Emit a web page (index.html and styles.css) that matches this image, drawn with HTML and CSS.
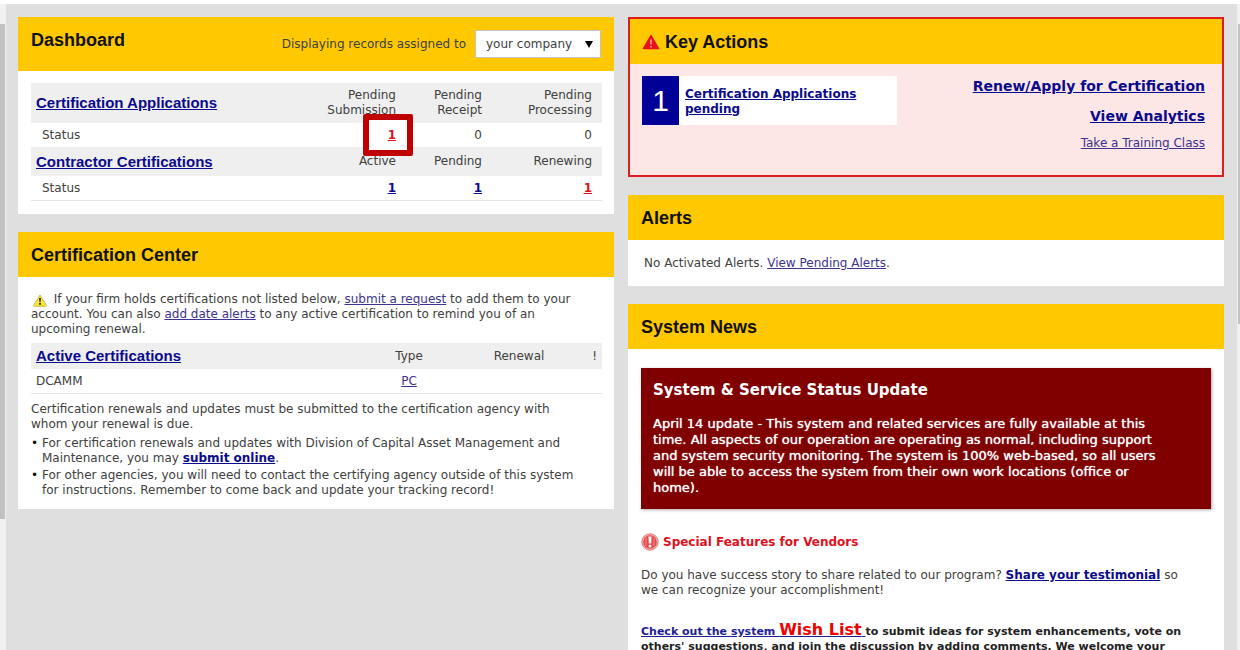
FILE: index.html
```html
<!DOCTYPE html>
<html lang="en">
<head>
    <meta charset="UTF-8">
    <meta name="viewport" content="width=device-width, initial-scale=1.0">
    <title>Dashboard</title>
    <link rel="stylesheet" href="styles.css">
</head>
<body>
    <div class="topline"></div>
    <div class="window">
        <div class="scrollbar scroll-left"><div class="thumb"></div></div>

        <main class="content">
            <div class="column">
                <section class="panel dashboard">
                    <div class="panel-head dashboard-head">
                        <h2>Dashboard</h2>
                        <div class="filter">
                            <label for="assigned">Displaying records assigned to</label>
                            <div class="select-wrap">
                                <select id="assigned">
                                    <option>your company</option>
                                </select>
                                <span class="select-arrow"></span>
                            </div>
                        </div>
                    </div>
                    <div class="panel-body">
                        <table class="status-table">
                            <colgroup>
                                <col>
                                <col class="col-first">
                                <col class="col-second">
                                <col class="col-third">
                            </colgroup>
                            <tr class="head-row">
                                <th><a href="#">Certification Applications</a></th>
                                <td>Pending Submission</td>
                                <td>Pending Receipt</td>
                                <td>Pending Processing</td>
                            </tr>
                            <tr>
                                <td class="row-label">Status</td>
                                <td class="marked"><span class="marker"></span><a class="count red" href="#">1</a></td>
                                <td>0</td>
                                <td>0</td>
                            </tr>
                            <tr class="head-row sub-head">
                                <th><a href="#">Contractor Certifications</a></th>
                                <td>Active</td>
                                <td>Pending</td>
                                <td>Renewing</td>
                            </tr>
                            <tr class="last-row">
                                <td class="row-label">Status</td>
                                <td><a class="count" href="#">1</a></td>
                                <td><a class="count" href="#">1</a></td>
                                <td><a class="count red" href="#">1</a></td>
                            </tr>
                        </table>
                    </div>
                </section>

                <section class="panel cert-center">
                    <div class="panel-head">
                        <h2>Certification Center</h2>
                    </div>
                    <div class="panel-body">
                        <p>
                            <svg class="icon-warn" width="16" height="13" viewBox="0 0 16 13">
                                <path d="M8 1 L14.5 11.5 Q14.5 12.3 13.5 12.3 H2.5 Q1.5 12.3 1.5 11.5 Z" fill="#f5e630" stroke="#c9bd6a" stroke-width="1"/>
                                <path d="M7 4 H9 L8.6 8 H7.4 Z" fill="#333"/>
                                <circle cx="8" cy="9.8" r="1.1" fill="#333"/>
                            </svg>
                            If your firm holds certifications not listed below, <a href="#">submit a request</a> to add them to your<br>
                            account. You can also <a href="#">add date alerts</a> to any active certification to remind you of an<br>
                            upcoming renewal.
                        </p>
                        <table class="cert-table">
                            <colgroup>
                                <col>
                                <col class="col-type">
                                <col class="col-renewal">
                                <col class="col-flag">
                            </colgroup>
                            <tr class="head-row">
                                <th><a href="#">Active Certifications</a></th>
                                <td>Type</td>
                                <td>Renewal</td>
                                <td class="flag">!</td>
                            </tr>
                            <tr class="last-row">
                                <td class="agency">DCAMM</td>
                                <td><a href="#">PC</a></td>
                                <td></td>
                                <td></td>
                            </tr>
                        </table>
                        <p>Certification renewals and updates must be submitted to the certification agency with<br>
                        whom your renewal is due.</p>
                        <ul>
                            <li>For certification renewals and updates with Division of Capital Asset Management and<br>
                            Maintenance, you may <a class="strong" href="#">submit online</a>.</li>
                            <li>For other agencies, you will need to contact the certifying agency outside of this system<br>
                            for instructions. Remember to come back and update your tracking record!</li>
                        </ul>
                    </div>
                </section>
            </div>

            <div class="column">
                <section class="panel key-actions">
                    <div class="panel-head">
                        <svg class="icon-alert" width="18" height="16" viewBox="0 0 18 16">
                            <path d="M9 1.5 L16.5 14.5 H1.5 Z" fill="#e8101c" stroke="#e8101c" stroke-width="1.5" stroke-linejoin="round"/>
                            <path d="M9 5.5 V10.5 M9 12 V13.5" stroke="#f7a08c" stroke-width="1.6"/>
                        </svg>
                        <h2>Key Actions</h2>
                    </div>
                    <div class="key-body">
                        <div class="pending-card">
                            <div class="pending-number">1</div>
                            <div class="pending-text"><a class="strong" href="#">Certification Applications pending</a></div>
                        </div>
                        <div class="key-links">
                            <a class="big" href="#">Renew/Apply for Certification</a>
                            <a class="big" href="#">View Analytics</a>
                            <a href="#">Take a Training Class</a>
                        </div>
                    </div>
                </section>

                <section class="panel">
                    <div class="panel-head">
                        <h2>Alerts</h2>
                    </div>
                    <div class="alerts-body">No Activated Alerts. <a href="#">View Pending Alerts</a>.</div>
                </section>

                <section class="panel news">
                    <div class="panel-head">
                        <h2>System News</h2>
                    </div>
                    <div class="news-body">
                        <div class="status-update">
                            <h3>System &amp; Service Status Update</h3>
                            <p>April 14 update - This system and related services are fully available at this<br>
                            time. All aspects of our operation are operating as normal, including support<br>
                            and system security monitoring. The system is 100% web-based, so all users<br>
                            will be able to access the system from their own work locations (office or<br>
                            home).</p>
                        </div>
                        <h4>
                            <svg width="18" height="18" viewBox="0 0 18 18">
                                <circle cx="9" cy="9" r="8.2" fill="#f4b0b0" stroke="#d88080" stroke-width="1"/>
                                <circle cx="9" cy="9" r="6.8" fill="#e84a4a"/>
                                <path d="M7.5 3.5 H10.5 L10.2 10.5 H7.8 Z" fill="#fff"/>
                                <circle cx="9" cy="13" r="1.5" fill="#fff"/>
                                <path d="M5 5 V13 M13 5 V13" stroke="#f08c8c" stroke-width="1"/>
                            </svg>
                            Special Features for Vendors
                        </h4>
                        <p>Do you have success story to share related to our program? <a class="strong" href="#">Share your testimonial</a> so<br>
                        we can recognize your accomplishment!</p>
                        <p class="wish"><a href="#">Check out the system <span class="wish-list">Wish List</span> </a>to submit ideas for system enhancements, vote on<br>
                        others' suggestions, and join the discussion by adding comments. We welcome your</p>
                    </div>
                </section>
            </div>
        </main>

        <div class="scrollbar scroll-right"><div class="thumb"></div></div>
    </div>
</body>
</html>
```

FILE: styles.css
```css
* {
    box-sizing: border-box;
}

body {
    margin: 0;
    height: 100vh;
    overflow: hidden;
    display: flex;
    flex-direction: column;
    background: #dfdfdf;
    color: #404040;
    font-family: Verdana, "DejaVu Sans", sans-serif;
    font-size: 12px;
    line-height: 15px;
}

h2, h3, h4, p, ul {
    margin: 0;
    padding: 0;
}

a {
    color: #3c3290;
}

.strong,
.count,
.big {
    color: #0a0a8c;
    font-weight: bold;
}

.red {
    color: #e0101c;
}

.topline {
    flex: none;
    height: 4px;
    background: #fff;
}

.window {
    flex: 1;
    min-height: 0;
    display: flex;
}

.scrollbar {
    flex: none;
    padding-top: 20px;
    background: #f1f1f1;
}

.scroll-left {
    width: 6px;
    padding-right: 1px;
}

.scroll-right {
    width: 3px;
    padding-left: 1px;
}

.thumb {
    background: #c1c1c1;
}

.scroll-left .thumb {
    height: 79%;
}

.scroll-right .thumb {
    height: 48%;
}

.content {
    flex: 1;
    display: grid;
    grid-template-columns: 1fr 1fr;
    gap: 14px;
    padding: 13px 13px 0 12px;
}

.column {
    display: flex;
    flex-direction: column;
    gap: 18px;
    min-width: 0;
}

.panel {
    flex: none;
    background: #fff;
}

.panel-head {
    display: flex;
    align-items: center;
    gap: 5px;
    padding: 11px 13px 10px;
    background: #ffc800;
}

h2 {
    color: #111;
    font: bold 18px/24px Arial, "Liberation Sans", sans-serif;
}

.panel-body {
    padding: 12px 12px 13px 13px;
}

/* Dashboard */
.dashboard-head {
    align-items: flex-start;
    justify-content: space-between;
    padding-bottom: 13px;
}

.filter {
    display: flex;
    align-items: center;
    gap: 9px;
    padding-top: 2px;
}

.select-wrap {
    position: relative;
}

select {
    appearance: none;
    width: 126px;
    height: 28px;
    padding: 0 10px;
    border: 1px solid #c0c0c0;
    border-radius: 0;
    background: #fff;
    color: #404040;
    font: inherit;
}

.select-arrow {
    position: absolute;
    top: 11px;
    right: 8px;
    border: 4px solid transparent;
    border-top: 7px solid #000;
    border-bottom: 0;
    pointer-events: none;
}

table {
    width: 100%;
    table-layout: fixed;
    border-collapse: collapse;
}

th {
    padding: 0 5px;
    text-align: left;
    font: bold 15px/18px Arial, "Liberation Sans", sans-serif;
}

th a {
    color: #0a0a8c;
}

td {
    padding: 5px 10px 4px;
}

.head-row {
    background: #efefef;
}

.last-row {
    border-bottom: 1px solid #e4e4e4;
}

.status-table td {
    text-align: right;
}

.status-table .row-label {
    padding-left: 11px;
    text-align: left;
}

.head-row td {
    padding-bottom: 5px;
}

.sub-head td {
    padding-top: 7px;
    padding-bottom: 7px;
}

.col-first {
    width: 90px;
}

.col-second {
    width: 86px;
}

.col-third {
    width: 110px;
}

.marked {
    position: relative;
}

.marker {
    position: absolute;
    top: -9px;
    right: -7px;
    width: 50px;
    height: 42px;
    border: 6px solid #c00000;
    border-radius: 2px;
    background: #fff;
}

.marked .count {
    position: relative;
}

/* Certification Center */
.cert-center .panel-body {
    padding-top: 15px;
    padding-bottom: 11px;
}

.icon-warn {
    margin: 0 2px 0 1px;
    vertical-align: -4px;
}

.cert-table {
    margin: 6px 0 8px;
}

.cert-table td {
    text-align: center;
}

.cert-table .agency {
    padding-left: 5px;
    text-align: left;
}

.cert-table .flag {
    padding-left: 0;
    padding-right: 5px;
    text-align: right;
}

.cert-table .head-row td {
    padding-top: 6px;
}

.col-type {
    width: 100px;
}

.col-renewal {
    width: 120px;
}

.col-flag {
    width: 23px;
}

ul {
    padding-top: 2px;
    list-style: none;
}

li {
    display: flow-root;
    padding-left: 11px;
    margin-top: 2px;
}

li::before {
    content: "•";
    float: left;
    width: 11px;
    margin-left: -11px;
    color: #111;
}

/* Key Actions */
.key-actions {
    border: 2px solid #dc1e1e;
    background: #fde6e6;
}

.key-actions .panel-head {
    padding: 11px 11px 10px 12px;
}

.key-body {
    display: flex;
    justify-content: space-between;
    align-items: flex-start;
    padding: 12px 17px 24px 12px;
}

.pending-card {
    display: flex;
    width: 255px;
    background: #fff;
}

.pending-number {
    width: 37px;
    background: #000096;
    color: #fff;
    font: 30px/49px Arial, "Liberation Sans", sans-serif;
    text-align: center;
}

.pending-text {
    flex: 1;
    padding: 11px 6px 0;
}

.key-links {
    display: flex;
    flex-direction: column;
    align-items: flex-end;
    gap: 10px;
}

.big {
    font-size: 14px;
    line-height: 20px;
}

/* Alerts */
.alerts-body {
    padding: 16px 16px 15px;
}

/* System News */
.news-body {
    padding: 19px 13px 24px;
}

.status-update {
    padding: 13px 12px;
    background: #800000;
    color: #fff;
    box-shadow: 1px 1px 3px #aaa;
}

h3 {
    margin-bottom: 17px;
    font-size: 15px;
    line-height: 18px;
}

.status-update p {
    font-size: 13px;
    line-height: 16px;
    text-shadow: 0 0 1px #fff;
}

h4 {
    display: flex;
    align-items: center;
    gap: 4px;
    margin: 24px 0 17px;
    color: #e0101c;
    font-size: 12px;
    line-height: 18px;
}

.news-body .wish {
    margin-top: 23px;
    color: #222;
    font-size: 11px;
    font-weight: bold;
}

.wish a {
    color: #1e1e96;
}

.wish-list {
    color: #f00000;
    font-size: 16px;
    line-height: 18px;
}
```
